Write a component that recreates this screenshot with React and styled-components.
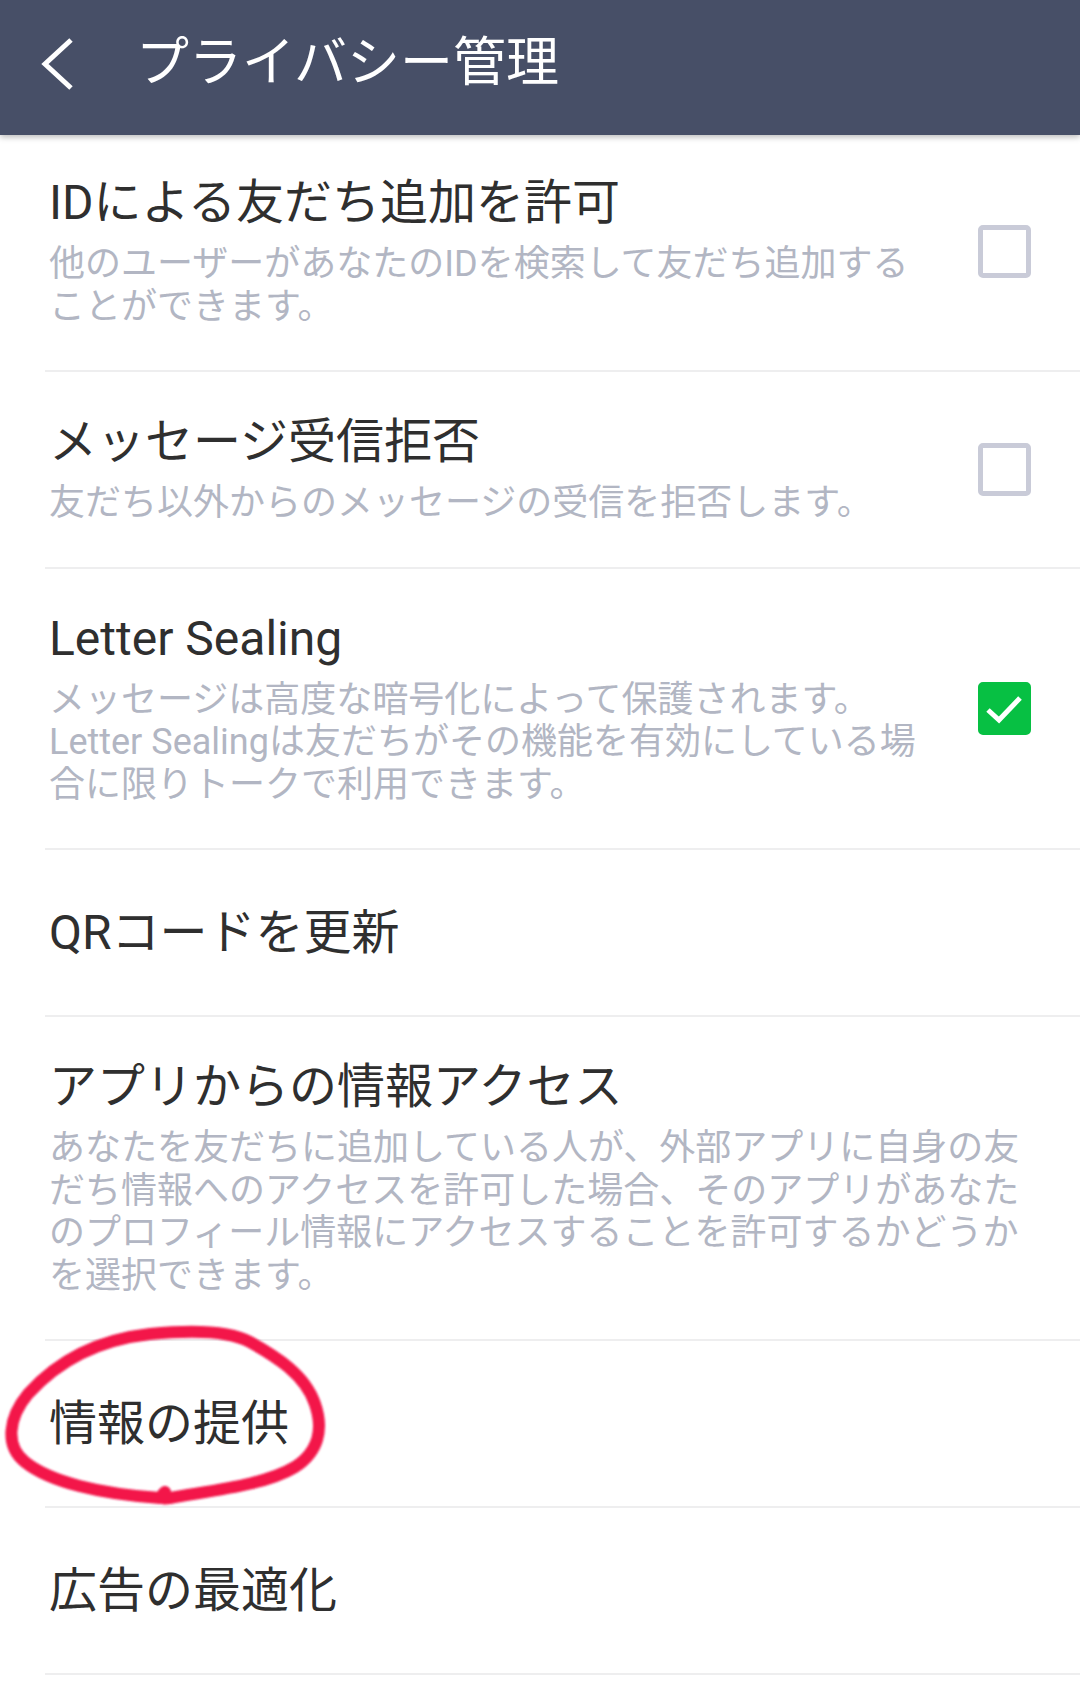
import styled, { createGlobalStyle } from "styled-components";

const GlobalStyle = createGlobalStyle`
  html, body {
    margin: 0;
    padding: 0;
    background: #ffffff;
  }
  body {
    font-family: Roboto, "Noto Sans CJK JP", sans-serif;
  }
`;

const Page = styled.div`
  width: 1080px;
  min-height: 1696px;
  background: #ffffff;
  overflow: hidden;
`;

const Header = styled.header`
  position: relative;
  z-index: 2;
  height: 135px;
  box-sizing: border-box;
  display: flex;
  align-items: center;
  padding: 0 0 8px 40px;
  background: #474f67;
  box-shadow: 0 2px 6px rgba(0, 0, 0, 0.28);
`;

const BackButton = styled.button`
  display: flex;
  align-items: center;
  border: 0;
  padding: 0;
  background: transparent;
  cursor: pointer;
`;

const HeaderTitle = styled.h1`
  margin: 0 0 0 62px;
  font-size: 53px;
  font-weight: 400;
  line-height: 1;
  color: #ffffff;
`;

const List = styled.div`
  display: flex;
  flex-direction: column;
`;

const Row = styled.div`
  position: relative;
  display: flex;
  align-items: center;
  margin-left: 45px;
  padding: ${(p) => (p.$plain ? "55px 45px 54px 4px" : "42px 49px 42px 4px")};
  border-bottom: 2px solid #eeeeef;

  &:first-child {
    padding-top: 40px;
  }
`;

const TextCol = styled.div`
  flex: 1;
  min-width: 0;
`;

const Title = styled.div`
  font-size: 48px;
  line-height: 56px;
  color: #2f2f2f;
  white-space: nowrap;
`;

const Desc = styled.div`
  margin-top: 12px;
  font-size: 36px;
  line-height: 42.5px;
  color: #b2b6c3;
`;

const DescLine = styled.span`
  display: block;
  white-space: nowrap;
`;

const Box = styled.div`
  flex: none;
  width: 53px;
  height: 53px;
  box-sizing: border-box;
  border-radius: 5px;
  border: 5px solid ${(p) => (p.$checked ? "#07c043" : "#c9cbd8")};
  background: ${(p) => (p.$checked ? "#07c043" : "#ffffff")};
  display: flex;
  align-items: center;
  justify-content: center;
`;

const Scribble = styled.svg`
  position: absolute;
  left: -45px;
  top: -19px;
  width: 340px;
  height: 190px;
  pointer-events: none;
  overflow: visible;
`;

const Chevron = () => (
  <svg width="34" height="56" viewBox="0 0 34 56">
    <path d="M31 4 L5 28 L31 52" fill="none" stroke="#ffffff" strokeWidth="5" />
  </svg>
);

const Checkbox = ({ checked }) => (
  <Box $checked={checked}>
    {checked && (
      <svg width="43" height="43" viewBox="0 0 43 43">
        <path d="M5 23 L16 33 L37 11" fill="none" stroke="#ffffff" strokeWidth="5" />
      </svg>
    )}
  </Box>
);

const items = [
  {
    title: "IDによる友だち追加を許可",
    desc: ["他のユーザーがあなたのIDを検索して友だち追加する", "ことができます。"],
    check: false,
  },
  {
    title: "メッセージ受信拒否",
    desc: ["友だち以外からのメッセージの受信を拒否します。"],
    check: false,
  },
  {
    title: "Letter Sealing",
    desc: [
      "メッセージは高度な暗号化によって保護されます。",
      "Letter Sealingは友だちがその機能を有効にしている場",
      "合に限りトークで利用できます。",
    ],
    check: true,
  },
  { title: "QRコードを更新" },
  {
    title: "アプリからの情報アクセス",
    desc: [
      "あなたを友だちに追加している人が、外部アプリに自身の友",
      "だち情報へのアクセスを許可した場合、そのアプリがあなた",
      "のプロフィール情報にアクセスすることを許可するかどうか",
      "を選択できます。",
    ],
  },
  { title: "情報の提供", marked: true },
  { title: "広告の最適化" },
];

export default function App() {
  return (
    <>
      <GlobalStyle />
      <Page>
        <Header>
          <BackButton aria-label="back">
            <Chevron />
          </BackButton>
          <HeaderTitle>プライバシー管理</HeaderTitle>
        </Header>
        <List>
          {items.map((it) => (
            <Row key={it.title} $plain={!it.desc}>
              <TextCol>
                <Title>{it.title}</Title>
                {it.desc && (
                  <Desc>
                    {it.desc.map((l) => (
                      <DescLine key={l}>{l}</DescLine>
                    ))}
                  </Desc>
                )}
              </TextCol>
              {it.check !== undefined && <Checkbox checked={it.check} />}
              {it.marked && (
                <Scribble viewBox="0 0 340 190">
                  <filter id="soft">
                    <feGaussianBlur stdDeviation="0.9" />
                  </filter>
                  <path
                    d="M160 176 C100 172 50 160 25 140 C5 124 8 96 28 72 C55 42 95 18 150 12 C190 8 228 8 250 20 C275 34 305 52 315 82 C324 108 318 130 295 145 C265 163 215 168 170 176 C162 178 160 174 165 170"
                    fill="none"
                    stroke="#f3124a"
                    strokeWidth="12"
                    strokeLinecap="round"
                    strokeLinejoin="round"
                    filter="url(#soft)"
                  />
                </Scribble>
              )}
            </Row>
          ))}
        </List>
      </Page>
    </>
  );
}
